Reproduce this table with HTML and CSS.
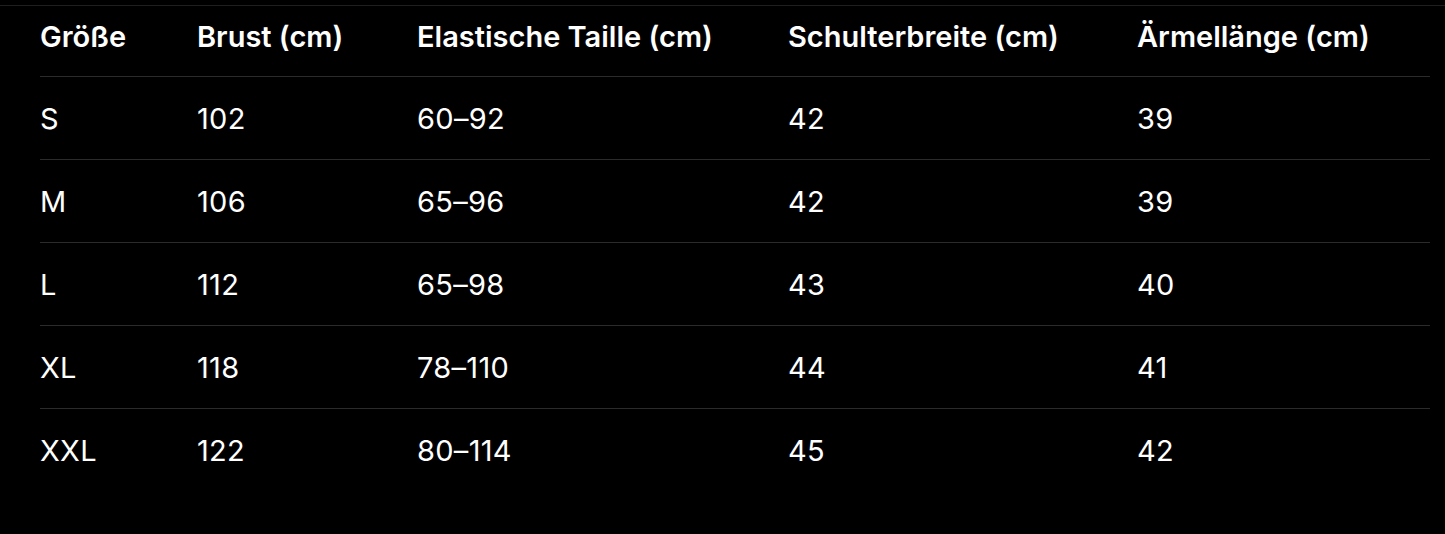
FILE: index.html
```html
<!DOCTYPE html>
<html lang="de">
<head>
<meta charset="utf-8">
<link rel="stylesheet" href="styles.css">
</head>
<body>
<div class="page">
  <table class="sizes">
    <colgroup>
      <col class="c1"><col class="c2"><col class="c3"><col class="c4"><col class="c5">
    </colgroup>
    <thead>
      <tr><th>Größe</th><th>Brust (cm)</th><th>Elastische Taille (cm)</th><th>Schulterbreite (cm)</th><th>Ärmellänge (cm)</th></tr>
    </thead>
    <tbody>
      <tr><td>S</td><td>102</td><td>60–92</td><td>42</td><td>39</td></tr>
      <tr><td>M</td><td>106</td><td>65–96</td><td>42</td><td>39</td></tr>
      <tr><td>L</td><td>112</td><td>65–98</td><td>43</td><td>40</td></tr>
      <tr><td>XL</td><td>118</td><td>78–110</td><td>44</td><td>41</td></tr>
      <tr><td>XXL</td><td>122</td><td>80–114</td><td>45</td><td>42</td></tr>
    </tbody>
  </table>
</div>
</body>
</html>
```

FILE: styles.css
```css
html, body {
  margin: 0;
  padding: 0;
  background: #000;
  height: 100%;
}
body {
  font-family: Inter, "Liberation Sans", sans-serif;
  color: #fff;
  overflow: hidden;
}
.page {
  margin-top: 5px;
  border-top: 1px solid #1f1f1f;
  padding-left: 40px;
}
.sizes {
  width: 1390px;
  border-collapse: collapse;
  table-layout: fixed;
}
.c1 { width: 157px; }
.c2 { width: 220px; }
.c3 { width: 371px; }
.c4 { width: 349px; }
.c5 { width: 293px; }
.sizes th, .sizes td {
  padding: 0;
  text-align: left;
  vertical-align: middle;
  font-size: 29px;
  white-space: nowrap;
}
.sizes th {
  font-weight: 600;
  height: 60px;
  padding-bottom: 10px;
  border-bottom: 1px solid #2b2b2b;
}
.sizes td {
  font-weight: 400;
  letter-spacing: 0.3px;
  height: 82px;
  border-bottom: 1px solid #2b2b2b;
}
.sizes tbody tr:last-child td {
  border-bottom: none;
}
```
